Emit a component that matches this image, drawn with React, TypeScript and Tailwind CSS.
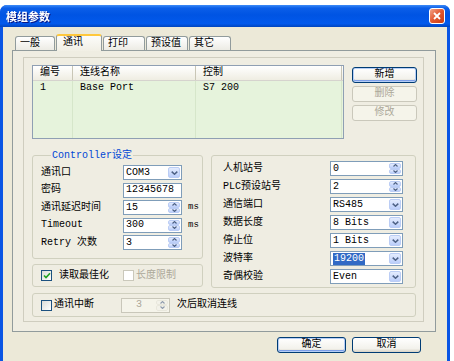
import React from "react"

const FONT = "font-['Liberation_Mono','Noto_Sans_CJK_SC',monospace]"

function Chevron({ up = false, small = false }: { up?: boolean; small?: boolean }) {
  const w = small ? 5 : 7
  const h = small ? 3 : 4
  return (
    <svg width={w} height={h} viewBox={`0 0 ${w} ${h}`} className={up ? "rotate-180" : ""}>
      <path
        d={small ? "M0.5 0.5 L2.5 2.5 L4.5 0.5" : "M0.7 0.6 L3.5 3.2 L6.3 0.6"}
        fill="none"
        stroke="#4D6185"
        strokeWidth={small ? 1.1 : 1.5}
      />
    </svg>
  )
}

function ComboBtn() {
  return (
    <div className="w-[12px] my-px mr-px flex items-center justify-center rounded-[2px] border border-[#BBCDF5] bg-[linear-gradient(to_bottom,#E4ECFE,#BBCEFA)]">
      <Chevron />
    </div>
  )
}

function SpinBtns({ disabled = false }: { disabled?: boolean }) {
  const cls = disabled
    ? "flex-1 flex items-center justify-center rounded-[2px] border border-[#E1DFD3] bg-[#F3F2EA] opacity-60"
    : "flex-1 flex items-center justify-center rounded-[2px] border border-[#BBCDF5] bg-[linear-gradient(to_bottom,#E4ECFE,#BBCEFA)]"
  return (
    <div className="w-[12px] my-px mr-px flex flex-col">
      <div className={cls}>
        <Chevron up small />
      </div>
      <div className={cls}>
        <Chevron small />
      </div>
    </div>
  )
}

interface FieldProps {
  w: string
  value: string
  kind?: "text" | "combo" | "spin"
  selected?: boolean
  disabled?: boolean
}

function Field({ w, value, kind = "text", selected, disabled }: FieldProps) {
  return (
    <div
      className={`h-[15px] ${w} flex border ${
        disabled ? "border-[#C9C7BA] bg-[#F5F4EA] text-[#ACA899]" : "border-[#7F9DB9] bg-white"
      }`}
    >
      <div className={`flex-1 flex items-center leading-none ${disabled ? "justify-center" : "pl-[2px]"}`}>
        {selected ? (
          <span className="bg-[#316AC5] text-white px-[1px] h-[12px] flex items-center">{value}</span>
        ) : (
          value
        )}
      </div>
      {kind === "combo" && <ComboBtn />}
      {kind === "spin" && <SpinBtns disabled={disabled} />}
    </div>
  )
}

function XpButton({ label, w, def, disabled }: { label: string; w: string; def?: boolean; disabled?: boolean }) {
  if (disabled) {
    return (
      <div className={`${w} h-[16px] flex items-center justify-center rounded-[3px] border border-[#CAC8BB] bg-[#F5F4EA] text-[#ACA899] leading-none`}>
        {label}
      </div>
    )
  }
  return (
    <div
      className={`${w} h-[16px] flex items-center justify-center rounded-[3px] border border-[#003C74] bg-[linear-gradient(to_bottom,#FFFFFF,#F3F2EC_75%,#D8D3C6)] leading-none ${
        def ? "shadow-[inset_0_0_0_1px_#B6CEF6,inset_0_-1px_0_1px_#7C9EE8]" : ""
      }`}
    >
      {label}
    </div>
  )
}

function CheckBox({ checked, disabled }: { checked?: boolean; disabled?: boolean }) {
  return (
    <div
      className={`w-[11px] h-[11px] flex items-center justify-center border ${
        disabled ? "border-[#CAC8BB] bg-white" : "border-[#1C5180] bg-[linear-gradient(135deg,#DCDCD7,#FFFFFF)]"
      }`}
    >
      {checked && (
        <svg width="8" height="7" viewBox="0 0 8 7">
          <path d="M1 3.5 L3 5.5 L7 1.2" fill="none" stroke="#21A121" strokeWidth="1.6" />
        </svg>
      )}
    </div>
  )
}

const tabs = [
  { label: "一般", w: "w-[40px]" },
  { label: "通讯", w: "w-[46px]", active: true },
  { label: "打印", w: "w-[42px]" },
  { label: "预设值", w: "w-[42px]" },
  { label: "其它", w: "w-[42px]" },
]

const leftRows: { label: string; value: string; kind: "text" | "combo" | "spin"; ms?: boolean }[] = [
  { label: "通讯口", value: "COM3", kind: "combo" },
  { label: "密码", value: "12345678", kind: "text" },
  { label: "通讯延迟时间", value: "15", kind: "spin", ms: true },
  { label: "Timeout", value: "300", kind: "spin", ms: true },
  { label: "Retry 次数", value: "3", kind: "spin" },
]

const rightRows: { label: string; value: string; kind: "text" | "combo" | "spin"; selected?: boolean }[] = [
  { label: "人机站号", value: "0", kind: "spin" },
  { label: "PLC预设站号", value: "2", kind: "spin" },
  { label: "通信端口", value: "RS485", kind: "combo" },
  { label: "数据长度", value: "8 Bits", kind: "combo" },
  { label: "停止位", value: "1 Bits", kind: "combo" },
  { label: "波特率", value: "19200", kind: "combo", selected: true },
  { label: "奇偶校验", value: "Even", kind: "combo" },
]

export default function App() {
  return (
    <div className={`w-[454px] h-[361px] overflow-hidden bg-white ${FONT} text-[10px] text-black`}>
      <div className="h-[5px]" />
      <div className="w-[450px] h-[356px] flex flex-col rounded-t-[7px] bg-[#0A55E4]">
        {/* Title bar */}
        <div className="h-[22px] shrink-0 flex items-center justify-between pl-[6px] pr-[5px] rounded-t-[7px] bg-[linear-gradient(to_bottom,#3D8BF7_0%,#0B5EE8_14%,#0054E3_45%,#0259EC_85%,#0044BD_100%)]">
          <span className="text-white font-bold text-[11px] leading-none font-['Noto_Sans_CJK_SC',sans-serif] drop-shadow-[1px_1px_0_#0A1883]">
            模组参数
          </span>
          <div className="w-[16px] h-[16px] flex items-center justify-center rounded-[3px] border border-white bg-[linear-gradient(135deg,#F2A48A,#E2562E_50%,#C83B12)]">
            <svg width="8" height="8" viewBox="0 0 8 8">
              <path d="M1 1 L7 7 M7 1 L1 7" stroke="white" strokeWidth="1.8" />
            </svg>
          </div>
        </div>

        {/* Body */}
        <div className="flex-1 mx-[3px] bg-[#ECE9D8] flex flex-col">
          {/* Tabs */}
          <div className="h-[23px] flex items-end gap-px pl-[12px]">
            {tabs.map((t) =>
              t.active ? (
                <div
                  key={t.label}
                  className={`${t.w} h-[17px] -mb-px relative z-10 flex items-center pl-[6px] pb-[2px] leading-none border-x border-[#919B9C] border-t-2 border-t-[#FFC83C] rounded-t-[3px] bg-[linear-gradient(to_bottom,#FCFCFA,#F1EFE5)]`}
                >
                  {t.label}
                </div>
              ) : (
                <div
                  key={t.label}
                  className={`${t.w} h-[14px] flex items-center pl-[4px] leading-none border border-b-0 border-[#919B9C] rounded-t-[3px] bg-[linear-gradient(to_bottom,#FFFFFF,#ECEBE4)]`}
                >
                  {t.label}
                </div>
              )
            )}
          </div>

          {/* Tab panel */}
          <div className="ml-[9px] w-[424px] h-[282px] border border-[#919B9C] bg-[#EFEDE2]">
            <div className="ml-[10px] mt-[6px] w-[401px] h-[265px] border border-[#CFCDBF] pl-[8px] pt-[7px]">
              {/* List + buttons */}
              <div className="flex">
                <div className="w-[312px] h-[74px] border border-[#8F9FB3] bg-[#E6F3DC] flex flex-col">
                  <div className="h-[15px] flex leading-none bg-[linear-gradient(to_bottom,#FFFFFF,#EFEDE2)] border-b border-[#D6D3CE]">
                    <div className="w-[40px] flex items-center pl-[7px] border-r border-[#C9C6B6]">编号</div>
                    <div className="w-[123px] flex items-center pl-[7px] border-r border-[#C9C6B6]">连线名称</div>
                    <div className="w-[146px] flex items-center pl-[7px] border-r border-[#C9C6B6]">控制</div>
                  </div>
                  <div className="flex-1 flex leading-none">
                    <div className="w-[40px] border-r border-[#D6E6CA]">
                      <div className="h-[13px] flex items-center pl-[7px]">1</div>
                    </div>
                    <div className="w-[123px] border-r border-[#D6E6CA]">
                      <div className="h-[13px] flex items-center pl-[7px]">Base Port</div>
                    </div>
                    <div className="w-[146px] border-r border-[#D6E6CA]">
                      <div className="h-[13px] flex items-center pl-[7px]">S7 200</div>
                    </div>
                  </div>
                </div>
                <div className="ml-[8px] pt-[2px] flex flex-col gap-[3px]">
                  <XpButton label="新增" w="w-[65px]" def />
                  <XpButton label="删除" w="w-[65px]" disabled />
                  <XpButton label="修改" w="w-[65px]" disabled />
                </div>
              </div>

              {/* Settings groups */}
              <div className="mt-[11px] flex">
                <div className="w-[171px] flex flex-col">
                  <fieldset className="w-[171px] h-[109px] border border-[#D0D0BF] rounded-[3px] pl-[8px] pt-[4px]">
                    <legend className="ml-[10px] px-[1px] text-[#0046D5] leading-[11px]">Controller设定</legend>
                    <div className="flex flex-col gap-[2.5px]">
                      {leftRows.map((r) => (
                        <div key={r.label} className="h-[15px] flex items-center leading-none">
                          <span className="w-[82px]">{r.label}</span>
                          <Field w="w-[59px]" value={r.value} kind={r.kind} />
                          {r.ms && <span className="ml-[6px] text-[9px]">ms</span>}
                        </div>
                      ))}
                    </div>
                  </fieldset>
                  <div className="mt-[5px] h-[23px] border border-[#D0D0BF] rounded-[3px] pl-[8px] flex items-center leading-none">
                    <CheckBox checked />
                    <span className="ml-[7px]">读取最佳化</span>
                    <div className="ml-[14px]">
                      <CheckBox disabled />
                    </div>
                    <span className="ml-[2px] text-[#ACA899]">长度限制</span>
                  </div>
                </div>

                <div className="ml-[8px] mt-[5px] w-[205px] h-[133px] border border-[#D0D0BF] rounded-[3px] pl-[11px] pt-[5px] flex flex-col gap-[3px]">
                  {rightRows.map((r) => (
                    <div key={r.label} className="h-[15px] flex items-center leading-none">
                      <span className="w-[107px]">{r.label}</span>
                      <Field w="w-[73px]" value={r.value} kind={r.kind} selected={r.selected} />
                    </div>
                  ))}
                </div>
              </div>

              {/* Disconnect */}
              <div className="mt-[5px] w-[384px] h-[24px] border border-[#D0D0BF] rounded-[3px] pl-[8px] flex items-center leading-none">
                <CheckBox />
                <span className="ml-[2px]">通讯中断</span>
                <div className="ml-[27px]">
                  <Field w="w-[49px]" value="3" kind="spin" disabled />
                </div>
                <span className="ml-[7px]">次后取消连线</span>
              </div>
            </div>
          </div>

          {/* Footer */}
          <div className="mt-[5px] flex pl-[274px] gap-[6px]">
            <XpButton label="确定" w="w-[69px]" def />
            <XpButton label="取消" w="w-[69px]" />
          </div>
        </div>
      </div>
    </div>
  )
}
